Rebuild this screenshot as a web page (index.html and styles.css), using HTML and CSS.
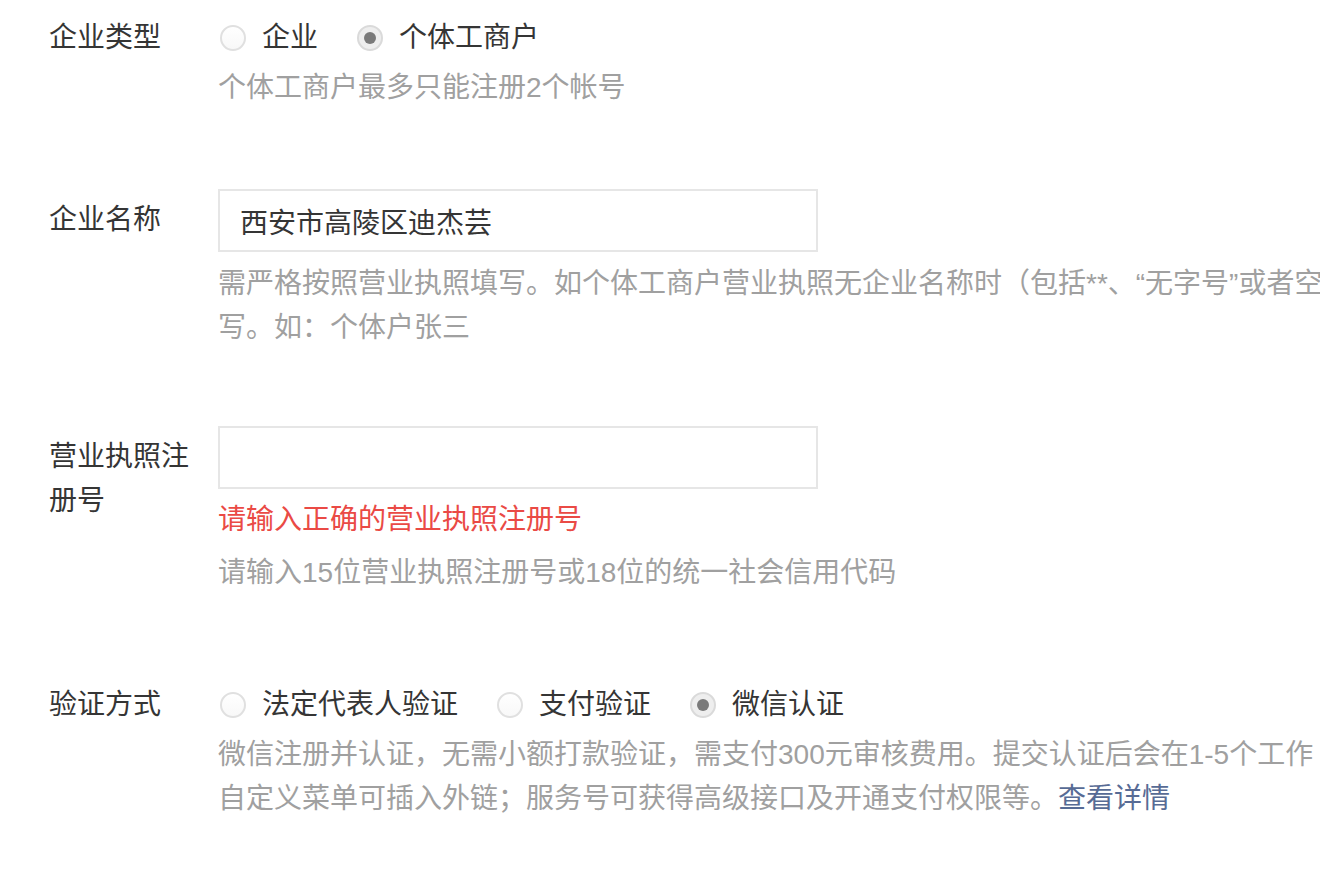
FILE: index.html
```html
<!DOCTYPE html>
<html lang="zh-CN">
<head>
<meta charset="utf-8">
<title>企业信息</title>
<link rel="stylesheet" href="styles.css">
</head>
<body>
<form class="form">
  <div class="row row-type">
    <div class="label">企业类型</div>
    <div class="control">
      <div class="radios">
        <label class="radio"><span class="dot"></span><span class="rtext">企业</span></label>
        <label class="radio"><span class="dot checked"></span><span class="rtext">个体工商户</span></label>
      </div>
      <p class="tip tip-radio">个体工商户最多只能注册2个帐号</p>
    </div>
  </div>

  <div class="row row-name">
    <div class="label label-input">企业名称</div>
    <div class="control">
      <input class="field" type="text" value="西安市高陵区迪杰芸">
      <p class="tip tip-input">需严格按照营业执照填写。如个体工商户营业执照无企业名称时（包括**、“无字号”或者空白等），请按“个体户+经营者姓名”格式填<br>写。如：个体户张三</p>
    </div>
  </div>

  <div class="row row-license">
    <div class="label label-input">营业执照注册号</div>
    <div class="control">
      <input class="field" type="text" value="">
      <p class="error">请输入正确的营业执照注册号</p>
      <p class="tip tip-input">请输入15位营业执照注册号或18位的统一社会信用代码</p>
    </div>
  </div>

  <div class="row row-verify">
    <div class="label">验证方式</div>
    <div class="control">
      <div class="radios">
        <label class="radio"><span class="dot"></span><span class="rtext">法定代表人验证</span></label>
        <label class="radio"><span class="dot"></span><span class="rtext">支付验证</span></label>
        <label class="radio"><span class="dot checked"></span><span class="rtext">微信认证</span></label>
      </div>
      <p class="tip tip-radio">微信注册并认证，无需小额打款验证，需支付300元审核费用。提交认证后会在1-5个工作<br>自定义菜单可插入外链；服务号可获得高级接口及开通支付权限等。<a class="link" href="#">查看详情</a></p>
    </div>
  </div>
</form>
</body>
</html>
```

FILE: styles.css
```css
html, body {
  margin: 0;
  padding: 0;
  background: #ffffff;
  overflow: hidden;
}

body {
  font-family: "Liberation Sans", "Noto Sans CJK SC", sans-serif;
  font-size: 28px;
  line-height: 44px;
  color: #353535;
}

.form {
  padding: 16px 0 0 49px;
  width: 2400px;
}

.row {
  display: flex;
  align-items: flex-start;
}

.row-name { margin-top: 79px; }
.row-license { margin-top: 76px; }
.row-verify { margin-top: 88px; }

.label {
  width: 150px;
  margin-right: 19px;
  flex-shrink: 0;
  color: #353535;
}

.label-input {
  padding-top: 9px;
}

.control {
  flex: 1;
  min-width: 0;
}

.radios {
  display: flex;
  align-items: center;
  height: 44px;
}

.radio {
  display: flex;
  align-items: center;
  margin-right: 37px;
  cursor: pointer;
}

.dot {
  box-sizing: border-box;
  width: 26px;
  height: 26px;
  margin-left: 2px;
  border-radius: 50%;
  border: 2px solid #e0e0e0;
  background: linear-gradient(#ffffff, #f8f8f8);
  position: relative;
  flex-shrink: 0;
}

.dot.checked {
  background: #eeeeee;
  border-color: #dadada;
}

.dot.checked::after {
  content: "";
  position: absolute;
  left: 50%;
  top: 50%;
  width: 12px;
  height: 12px;
  margin: -6px 0 0 -6px;
  border-radius: 50%;
  background: #7a7a7a;
}

.rtext {
  margin-left: 16px;
  color: #353535;
}

.tip, .error {
  margin: 0;
  white-space: nowrap;
}

.tip {
  color: #a0a0a0;
}

.tip-radio { margin-top: 6px; }
.tip-input { margin-top: 10px; }

.error {
  color: #ea4a45;
  margin-top: 9px;
}

.error + .tip-input { margin-top: 9px; }

.field {
  box-sizing: border-box;
  display: block;
  width: 600px;
  height: 63px;
  margin: 0;
  padding: 0 20px;
  border: 2px solid #e6e6e6;
  border-radius: 0;
  outline: none;
  background: #ffffff;
  font-family: "Liberation Sans", "Noto Sans CJK SC", sans-serif;
  font-size: 28px;
  color: #353535;
}

.link {
  color: #576b95;
  text-decoration: none;
}
```
